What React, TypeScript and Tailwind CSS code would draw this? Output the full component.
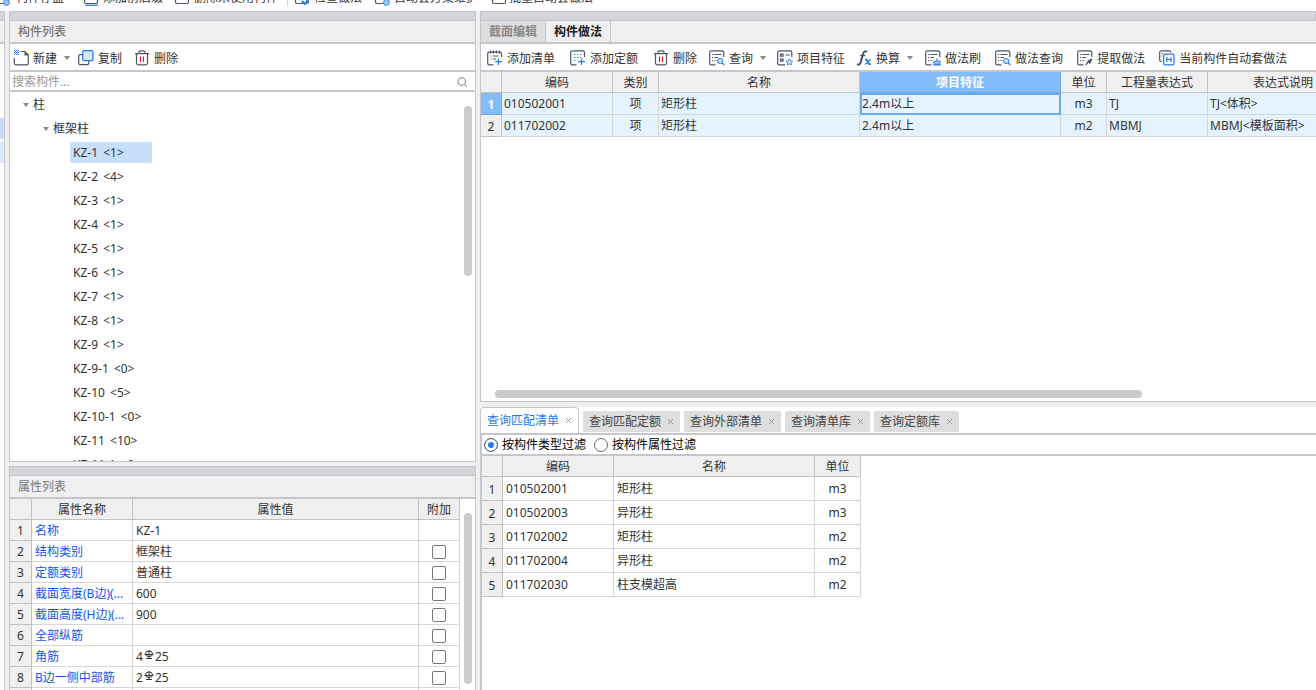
import type { ReactNode } from 'react';

const INK = '#4a5568';
const BLUE = '#1f7ae8';

function Icon({ children }: { children: ReactNode }) {
  return (
    <svg className="size-4 shrink-0" viewBox="0 0 16 16" fill="none" stroke={INK} strokeWidth="1.2" aria-hidden="true">
      {children}
    </svg>
  );
}

function NewIcon() {
  return (
    <Icon>
      <path d="M7.500 1.500h4.500l3.300 3.300v8.400a1.600 1.600 0 0 1-1.600 1.600H2.900a1.600 1.600 0 0 1-1.600-1.600V8" />
      <path d="M11.500 1.500v4h4z" fill={INK} stroke="none" />
      <path d="M1 .5h1M3 .5h1M5 .5h1M2 1.500h1M4 1.500h1M1 2.500h1M3 2.500h1M5 2.500h1M2 3.500h1M4 3.500h1M1 4.500h1M3 4.500h1M5 4.500h1" stroke={BLUE} strokeWidth="1" />
    </Icon>
  );
}

function CopyIcon() {
  return (
    <Icon>
      <path d="M4 4.700H2.200A1.500 1.500 0 0 0 .7 6.200v7a1.500 1.500 0 0 0 1.500 1.500h7a1.500 1.500 0 0 0 1.500-1.500V11" />
      <rect x="4.700" y=".7" width="10.300" height="10" rx="1.500" fill="#d4e6fb" stroke={BLUE} />
    </Icon>
  );
}

function TrashIcon() {
  return (
    <Icon>
      <path d="M1 3.700h14M5 3.500V2.200A1.400 1.400 0 0 1 6.400.8h3.200A1.400 1.400 0 0 1 11 2.200v1.300M2.500 3.700v9.300a1.800 1.800 0 0 0 1.800 1.800h7.400a1.800 1.800 0 0 0 1.800-1.800V3.700" />
      <path d="M6.500 6.500v5.500M9.500 6.500v5.500" stroke="#e02020" />
    </Icon>
  );
}

function AddListIcon() {
  return (
    <Icon>
      <path d="M14.500 7V3.800a1.600 1.600 0 0 0-1.600-1.600H2.300A1.600 1.600 0 0 0 .7 3.800v9.400a1.600 1.600 0 0 0 1.600 1.600H6.500" />
      <path d="M3.500.5v3M6.500.5v3M9.500.5v3M12.500.5v3M3.500 6h1M6 6h5.500M3.500 9h1M6 9h3" />
      <path d="M11.500 8.500V15M8.200 11.700H15" stroke={BLUE} />
    </Icon>
  );
}

function AddQuotaIcon() {
  return (
    <Icon>
      <path d="M14.500 7V2.500A1.600 1.600 0 0 0 12.900.9H2.300A1.600 1.600 0 0 0 .7 2.500v10.700a1.600 1.600 0 0 0 1.600 1.600H6.500" />
      <path d="M4 4.500h8.500M4 7.500h8.500M4 10.500h3" stroke={BLUE} strokeDasharray="1.200 1.800" />
      <path d="M11.500 8.500V15M8.200 11.700H15" stroke={BLUE} />
    </Icon>
  );
}

function Sheet() {
  return (
    <>
      <path d="M14.800 7V2.500A1.600 1.600 0 0 0 13.200.9H2.300A1.600 1.600 0 0 0 .7 2.500v10.700a1.600 1.600 0 0 0 1.600 1.600H6.500" />
      <path d="M3 4.500h1.200M5.500 4.500h7M3 7.500h1.200M5.500 7.500h3.500M3 10.500h1.200M5.500 10.500h1.300" />
    </>
  );
}

function QueryIcon() {
  return (
    <Icon>
      <Sheet />
      <circle cx="11.200" cy="11" r="2.600" fill="#cfe4fc" stroke={BLUE} strokeWidth="1" />
      <path d="M13.200 13l2.200 2.200" stroke={BLUE} />
    </Icon>
  );
}

function FeatureIcon() {
  return (
    <Icon>
      <path d="M14.800 7V2.500A1.600 1.600 0 0 0 13.200.9H2.300A1.600 1.600 0 0 0 .7 2.500v10.700a1.600 1.600 0 0 0 1.600 1.600H8" />
      <path d="M3.500 4.200h2.500v2H3.500zM3.500 9.200h2.500v2H3.500zM8.500 5h4.500" />
      <path d="M12.300 8.900l1 2 2.200.3-1.600 1.500.4 2.200-2-1.100-2 1.100.4-2.200-1.600-1.500 2.200-.3z" fill="#eaf3fe" stroke={BLUE} strokeWidth=".9" />
    </Icon>
  );
}

function FormulaIcon() {
  return (
    <Icon>
      <path d="M10.800 2.300C10.500.8 8.100.4 7.200 3.500L4.700 12.300c-.6 2.200-2.200 2.900-3.600 1.800" strokeWidth="2" />
      <path d="M4 5.500h5.500" strokeWidth="1.300" />
      <path d="M9 9.800c1.700-.8 2.200.2 2.700 2s1.200 2.900 3 2" stroke={BLUE} strokeWidth="1.900" />
      <path d="M15 9.600c-2-.2-3.500 4.600-6 4.500" stroke={BLUE} strokeWidth="1.300" />
    </Icon>
  );
}

function BrushIcon() {
  return (
    <Icon>
      <Sheet />
      <path d="M9 11.300h6v3.600H9zM12 11V8.600" fill="#cfe4fc" stroke={BLUE} strokeWidth="1.100" />
      <path d="M11 15v-2.300M13 15v-2.300" stroke={BLUE} strokeWidth=".9" />
    </Icon>
  );
}

function ExtractIcon() {
  return (
    <Icon>
      <Sheet />
      <path d="M8.500 15.200l3.700-4.200" />
      <path d="M10.800 10.600l2.900 2.500M12.200 11.700l2.500-2.700" strokeWidth="2.200" />
    </Icon>
  );
}

function AutoIcon() {
  return (
    <Icon>
      <path d="M3 11.500h-.8A1.500 1.500 0 0 1 .7 10V2.400A1.500 1.500 0 0 1 2.200.9h8.100a1.500 1.500 0 0 1 1.500 1.500M2.800 3.500h1.200M2.800 6h.8" />
      <rect x="4.700" y="4.200" width="10.300" height="10.600" rx="1.200" stroke={BLUE} fill="#fff" />
      <path d="M7.800 7v5M12 7v5M7.800 9.500H12" stroke={BLUE} />
    </Icon>
  );
}

function RibbonBox({ accent }: { accent?: 'fill' | 'check' | 'line' }) {
  return (
    <Icon>
      <path d="M1.500 3v9A1.500 1.500 0 0 0 3 13.500h10a1.500 1.500 0 0 0 1.500-1.500V3" />
      {accent === 'line' && <path d="M2 15.300h13" stroke={BLUE} />}
      {accent === 'fill' && <circle cx="12.500" cy="12.500" r="3" fill="#9cc5f7" stroke={BLUE} strokeWidth=".8" />}
      {accent === 'check' && <path d="M8 11l2.700 3 4.300-5" stroke={BLUE} strokeWidth="2" />}
    </Icon>
  );
}

function Caret() {
  return (
    <svg className="h-1 w-1.5 shrink-0 fill-[#888]" viewBox="0 0 6 4" aria-hidden="true">
      <path d="M0 0h6L3 4z" />
    </svg>
  );
}

function Rebar() {
  return (
    <svg className="mx-px mb-0.5 inline-block h-[9px] w-2.5 align-baseline" viewBox="0 0 10 9" fill="none" stroke="#333" strokeWidth="1" role="img" aria-label="HRB400">
      <ellipse cx="5" cy="3.800" rx="3.500" ry="2.800" />
      <path d="M5 0v8.500M.5 4.500h9M2 8.500h6" />
    </svg>
  );
}

function Tool({ icon, label, menu }: { icon: ReactNode; label: string; menu?: boolean }) {
  return (
    <button type="button" className="flex shrink-0 items-center gap-1 whitespace-nowrap">
      {icon}
      <span className="pt-px">{label}</span>
      {menu && <span className="pl-[3px]"><Caret /></span>}
    </button>
  );
}

function Grip() {
  return <div className="h-2.5 shrink-0 border border-[#c5c6cb] bg-[#d4d5da]" />;
}

const members = [
  ['KZ-1', '<1>'], ['KZ-2', '<4>'], ['KZ-3', '<1>'], ['KZ-4', '<1>'], ['KZ-5', '<1>'], ['KZ-6', '<1>'], ['KZ-7', '<1>'],
  ['KZ-8', '<1>'], ['KZ-9', '<1>'], ['KZ-9-1', '<0>'], ['KZ-10', '<5>'], ['KZ-10-1', '<0>'], ['KZ-11', '<10>'], ['KZ-11-1', '<0>'],
];

const properties: { name: string; value: ReactNode; extra: boolean }[] = [
  { name: '名称', value: 'KZ-1', extra: false },
  { name: '结构类别', value: '框架柱', extra: true },
  { name: '定额类别', value: '普通柱', extra: true },
  { name: '截面宽度(B边)(...', value: '600', extra: true },
  { name: '截面高度(H边)(...', value: '900', extra: true },
  { name: '全部纵筋', value: '', extra: true },
  { name: '角筋', value: <>4<Rebar />25</>, extra: true },
  { name: 'B边一侧中部筋', value: <>2<Rebar />25</>, extra: true },
];

const methods = [
  { code: '010502001', unit: 'm3', expr: 'TJ', note: 'TJ<体积>' },
  { code: '011702002', unit: 'm2', expr: 'MBMJ', note: 'MBMJ<模板面积>' },
];

const matches = [
  ['010502001', '矩形柱', 'm3'],
  ['010502003', '异形柱', 'm3'],
  ['011702002', '矩形柱', 'm2'],
  ['011702004', '异形柱', 'm2'],
  ['011702030', '柱支模超高', 'm2'],
];

const queryTabs = ['查询匹配清单', '查询匹配定额', '查询外部清单', '查询清单库', '查询定额库'];

const head = 'border-r border-b border-[#c3c3c6] bg-[#efefef] p-0 pt-0.5 text-center font-normal';
const cell = 'border-r border-b border-[#d6d6d6] p-0 px-[3px] pt-px whitespace-nowrap';
const tight = 'border-r border-b border-[#d6d6d6] p-0 px-0.5 pt-px whitespace-nowrap';

function Ribbon() {
  return (
    <header className="flex h-[11px] shrink-0 items-end overflow-hidden bg-white whitespace-nowrap">
      <div className="flex items-end pb-[5px] leading-4">
        <button type="button" className="-ml-1.5 flex w-[89px] shrink-0 items-center gap-1.5"><RibbonBox accent="fill" />构件存盘</button>
        <button type="button" className="flex w-[91px] shrink-0 items-center gap-1"><RibbonBox accent="line" />添加前后缀</button>
        <button type="button" className="flex w-[113px] shrink-0 items-center gap-1"><RibbonBox />删除未使用构件</button>
        <span className="h-5 w-px shrink-0 bg-[#d0d0d4]" />
        <button type="button" className="flex w-[86px] shrink-0 items-center gap-1 pl-1.5"><RibbonBox accent="check" />检查做法</button>
        <button type="button" className="flex w-[99px] shrink-0 items-center gap-1 overflow-hidden"><RibbonBox accent="fill" />自动套方案维护</button>
        <button type="button" className="ml-[18px] flex shrink-0 items-center gap-0.5"><RibbonBox />批量自动套做法</button>
      </div>
    </header>
  );
}

function EdgePane() {
  return (
    <aside className="flex w-[5px] shrink-0 flex-col border-r border-[#c5c6cb] bg-white">
      <div className="h-2.5 border-y border-[#c5c6cb] bg-[#d4d5da]" />
      <div className="h-[23px] border-b-2 border-[#c5c6cb] bg-[#efefef]" />
      <div className="mt-[74px] h-[21px] bg-[#c8dffb]" />
      <div className="mt-[3px] h-[21px] bg-[#d9eafd]" />
    </aside>
  );
}

function MemberPanel() {
  return (
    <section className="flex min-h-0 flex-1 flex-col">
      <Grip />
      <h2 className="h-[23px] shrink-0 border-x border-b-2 border-[#c5c6cb] pl-2 leading-[21px] font-medium text-[#777]">构件列表</h2>
      <div className="flex h-7 shrink-0 items-center gap-3 border-x border-b-2 border-[#c5c6cb] bg-white pt-0.5 pl-[3px]">
        <div className="flex gap-2"><Tool icon={<NewIcon />} label="新建" menu /><Tool icon={<CopyIcon />} label="复制" /></div>
        <Tool icon={<TrashIcon />} label="删除" />
      </div>
      <label className="flex h-5 shrink-0 items-center rounded-xs border-x border-b-2 border-[#c5c6cb] bg-white pt-px pr-2 pl-0.5">
        <input type="text" aria-label="搜索构件" placeholder="搜索构件..." className="h-4 min-w-0 flex-1 bg-transparent outline-none placeholder:text-[#999]" />
        <svg className="size-2.5" viewBox="0 0 10 10" fill="none" stroke="#999" strokeWidth="1.2" aria-hidden="true">
          <circle cx="4.700" cy="4.500" r="3.800" />
          <path d="M7.300 7.300L9.800 9.800" />
        </svg>
      </label>
      <div className="flex min-h-0 flex-1 overflow-hidden border-x border-b border-[#c5c6cb] bg-white">
        <ul className="min-w-0 flex-1 leading-6">
          <li>
            <div className="flex h-6 items-center gap-1 pt-0.5 pl-[13px]"><Caret />柱</div>
            <ul>
              <li>
                <div className="flex h-6 items-center gap-1 pt-0.5 pl-[33px]"><Caret />框架柱</div>
                <ul className="pl-[60px]">
                  {members.map(([name, count], i) => (
                    <li key={name} className="flex h-6 items-center">
                      <span className={i === 0 ? 'w-[82px] rounded-xs bg-[#c8dffb] pl-[3px] leading-[21px]' : 'pl-[3px] leading-[21px]'}>
                        {name} <span className="ml-0.5">{count}</span>
                      </span>
                    </li>
                  ))}
                </ul>
              </li>
            </ul>
          </li>
        </ul>
        <div className="mt-3.5 mr-[3px] h-[170px] w-2 shrink-0 rounded-full bg-[#cbcbcb]" />
      </div>
    </section>
  );
}

function PropertyPanel() {
  return (
    <section className="flex h-56 shrink-0 flex-col overflow-hidden">
      <Grip />
      <h2 className="h-[23px] shrink-0 border-x border-b-2 border-[#c5c6cb] pl-2 leading-[21px] text-[#777]">属性列表</h2>
      <div className="flex min-h-0 flex-1 overflow-hidden border-x border-[#c5c6cb] bg-white">
        <div className="min-w-0 flex-1">
          <table className="w-full table-fixed border-separate border-spacing-0">
            <colgroup><col className="w-[22px]" /><col className="w-[101px]" /><col /><col className="w-[41px]" /></colgroup>
            <thead>
              <tr className="h-[21px]"><th className={head} /><th className={head}>属性名称</th><th className={head}>属性值</th><th className={head}>附加</th></tr>
            </thead>
            <tbody>
              {properties.map((p, i) => (
                <tr key={p.name} className="h-[21px]">
                  <th className={head}>{i + 1}</th>
                  <td className={`${cell} text-[#1155ee]`}>{p.name}</td>
                  <td className={cell}>{p.value}</td>
                  <td className={cell}>
                    {p.extra && <input type="checkbox" aria-label={`附加 ${p.name}`} className="mx-auto block size-3.5 appearance-none rounded-xs border border-[#777] bg-white" />}
                  </td>
                </tr>
              ))}
              <tr className="h-[21px]"><th className={head} /><td className={cell} /><td className={cell} /><td className={cell} /></tr>
            </tbody>
          </table>
        </div>
        <div className="mt-3.5 mr-[3px] mb-1.5 ml-1 w-2 shrink-0 rounded-full bg-[#cbcbcb]" />
      </div>
    </section>
  );
}

function MethodPanel() {
  const current = 'border-r border-b border-[#6ca8ea] bg-[#84bbfa] p-0 pt-0.5 text-center font-bold text-white';
  return (
    <section className="flex min-h-0 flex-1 flex-col">
      <Grip />
      <div role="tablist" className="flex h-[23px] shrink-0 border-b-2 border-l border-[#c5c6cb] font-bold">
        <button type="button" role="tab" aria-selected="false" className="border-r border-[#c5c6cb] bg-[#dedede] px-2 text-[#888]">截面编辑</button>
        <button type="button" role="tab" aria-selected="true" className="border-r border-[#c5c6cb] px-2 text-[#222]">构件做法</button>
      </div>
      <div className="flex h-7 shrink-0 items-center gap-3 overflow-hidden border-b-2 border-l border-[#c5c6cb] bg-white pt-0.5 pl-1.5">
        <div className="flex gap-[15px]">
          <Tool icon={<AddListIcon />} label="添加清单" />
          <Tool icon={<AddQuotaIcon />} label="添加定额" />
          <Tool icon={<TrashIcon />} label="删除" />
        </div>
        <div className="flex gap-[11px]">
          <Tool icon={<QueryIcon />} label="查询" menu />
          <Tool icon={<FeatureIcon />} label="项目特征" />
          <Tool icon={<FormulaIcon />} label="换算" menu />
        </div>
        <div className="flex gap-3.5">
          <Tool icon={<BrushIcon />} label="做法刷" />
          <Tool icon={<QueryIcon />} label="做法查询" />
          <Tool icon={<ExtractIcon />} label="提取做法" />
          <Tool icon={<AutoIcon />} label="当前构件自动套做法" />
        </div>
      </div>
      <div className="flex min-h-0 flex-1 flex-col overflow-hidden border-b border-l border-[#c5c6cb] bg-white">
        <table className="w-[878px] table-fixed border-separate border-spacing-0">
          <colgroup>
            <col className="w-[21px]" /><col className="w-[111px]" /><col className="w-[46px]" /><col className="w-[201px]" />
            <col className="w-[201px]" /><col className="w-[46px]" /><col className="w-[101px]" /><col className="w-[151px]" />
          </colgroup>
          <thead>
            <tr className="h-[21px]">
              <th className={head} /><th className={head}>编码</th><th className={head}>类别</th><th className={head}>名称</th>
              <th className={current}>项目特征</th><th className={head}>单位</th><th className={head}>工程量表达式</th><th className={head}>表达式说明</th>
            </tr>
          </thead>
          <tbody>
            {methods.map((m, i) => (
              <tr key={m.code} className="h-[22px] bg-[#e5f3ff]">
                <th className={i === 0 ? current : head}>{i + 1}</th>
                <td className={tight}>{m.code}</td>
                <td className={`${tight} text-center`}>项</td>
                <td className={tight}>矩形柱</td>
                <td className={i === 0 ? `${tight} outline-2 -outline-offset-2 outline-[#6ca8ea]` : tight}>2.4m以上</td>
                <td className={`${tight} text-center`}>{m.unit}</td>
                <td className={tight}>{m.expr}</td>
                <td className={tight}>{m.note}</td>
              </tr>
            ))}
          </tbody>
        </table>
        <div className="mt-auto mb-[3px] ml-3.5 h-2 w-[77.5%] shrink-0 rounded-full bg-[#cbcbcb]" />
      </div>
    </section>
  );
}

function QueryPanel() {
  const radio = 'size-3.5 appearance-none rounded-full border border-[#666] bg-white checked:bg-[#1f7ae8] checked:shadow-[inset_0_0_0_3px_white]';
  return (
    <section className="flex h-[283px] shrink-0 flex-col bg-white">
      <div role="tablist" className="flex h-7 shrink-0 items-end gap-1 border-b-2 border-[#c5c6cb]">
        {queryTabs.map((t, i) => (
          <button
            key={t}
            type="button"
            role="tab"
            aria-selected={i === 0}
            className={
              i === 0
                ? 'flex h-[26px] items-center gap-1.5 rounded-t border border-b-0 border-[#c5c6cb] bg-white px-1.5 text-[#1f7ae8]'
                : 'mb-px flex h-[21px] items-center gap-1.5 rounded-t-xs bg-[#dedede] px-1.5 text-[#444]'
            }
          >
            {t}
            <svg className="size-[7px]" viewBox="0 0 7 7" stroke="#999" strokeWidth="1" aria-hidden="true"><path d="M1 1l5 5M6 1L1 6" /></svg>
          </button>
        ))}
      </div>
      <div className="flex h-[21px] shrink-0 items-center gap-2 border-b-2 border-l-2 border-[#c5c6cb] pl-0.5 text-black">
        <label className="flex items-center gap-1"><input type="radio" name="filter" defaultChecked className={radio} />按构件类型过滤</label>
        <label className="flex items-center gap-1"><input type="radio" name="filter" className={radio} />按构件属性过滤</label>
      </div>
      <div className="min-h-0 flex-1 overflow-hidden border-l-2 border-[#c5c6cb]">
        <table className="w-[379px] table-fixed border-separate border-spacing-0">
          <colgroup><col className="w-[21px]" /><col className="w-[111px]" /><col className="w-[201px]" /><col className="w-[46px]" /></colgroup>
          <thead>
            <tr className="h-[21px]"><th className={head} /><th className={head}>编码</th><th className={head}>名称</th><th className={head}>单位</th></tr>
          </thead>
          <tbody>
            {matches.map(([code, name, unit], i) => (
              <tr key={code} className="h-6">
                <th className={head}>{i + 1}</th>
                <td className={cell}>{code}</td>
                <td className={cell}>{name}</td>
                <td className={`${cell} text-center`}>{unit}</td>
              </tr>
            ))}
          </tbody>
        </table>
      </div>
    </section>
  );
}

export default function App() {
  return (
    <div className="flex h-screen flex-col overflow-hidden bg-[#efefef] font-['Noto_Sans','Noto_Sans_CJK_SC',sans-serif] text-[12px] leading-4 text-[#333]">
      <Ribbon />
      <main className="flex min-h-0 flex-1">
        <EdgePane />
        <div className="ml-1 flex w-[467px] shrink-0 flex-col gap-1">
          <MemberPanel />
          <PropertyPanel />
        </div>
        <div className="ml-1 flex min-w-0 flex-1 flex-col gap-[5px]">
          <MethodPanel />
          <QueryPanel />
        </div>
      </main>
    </div>
  );
}
